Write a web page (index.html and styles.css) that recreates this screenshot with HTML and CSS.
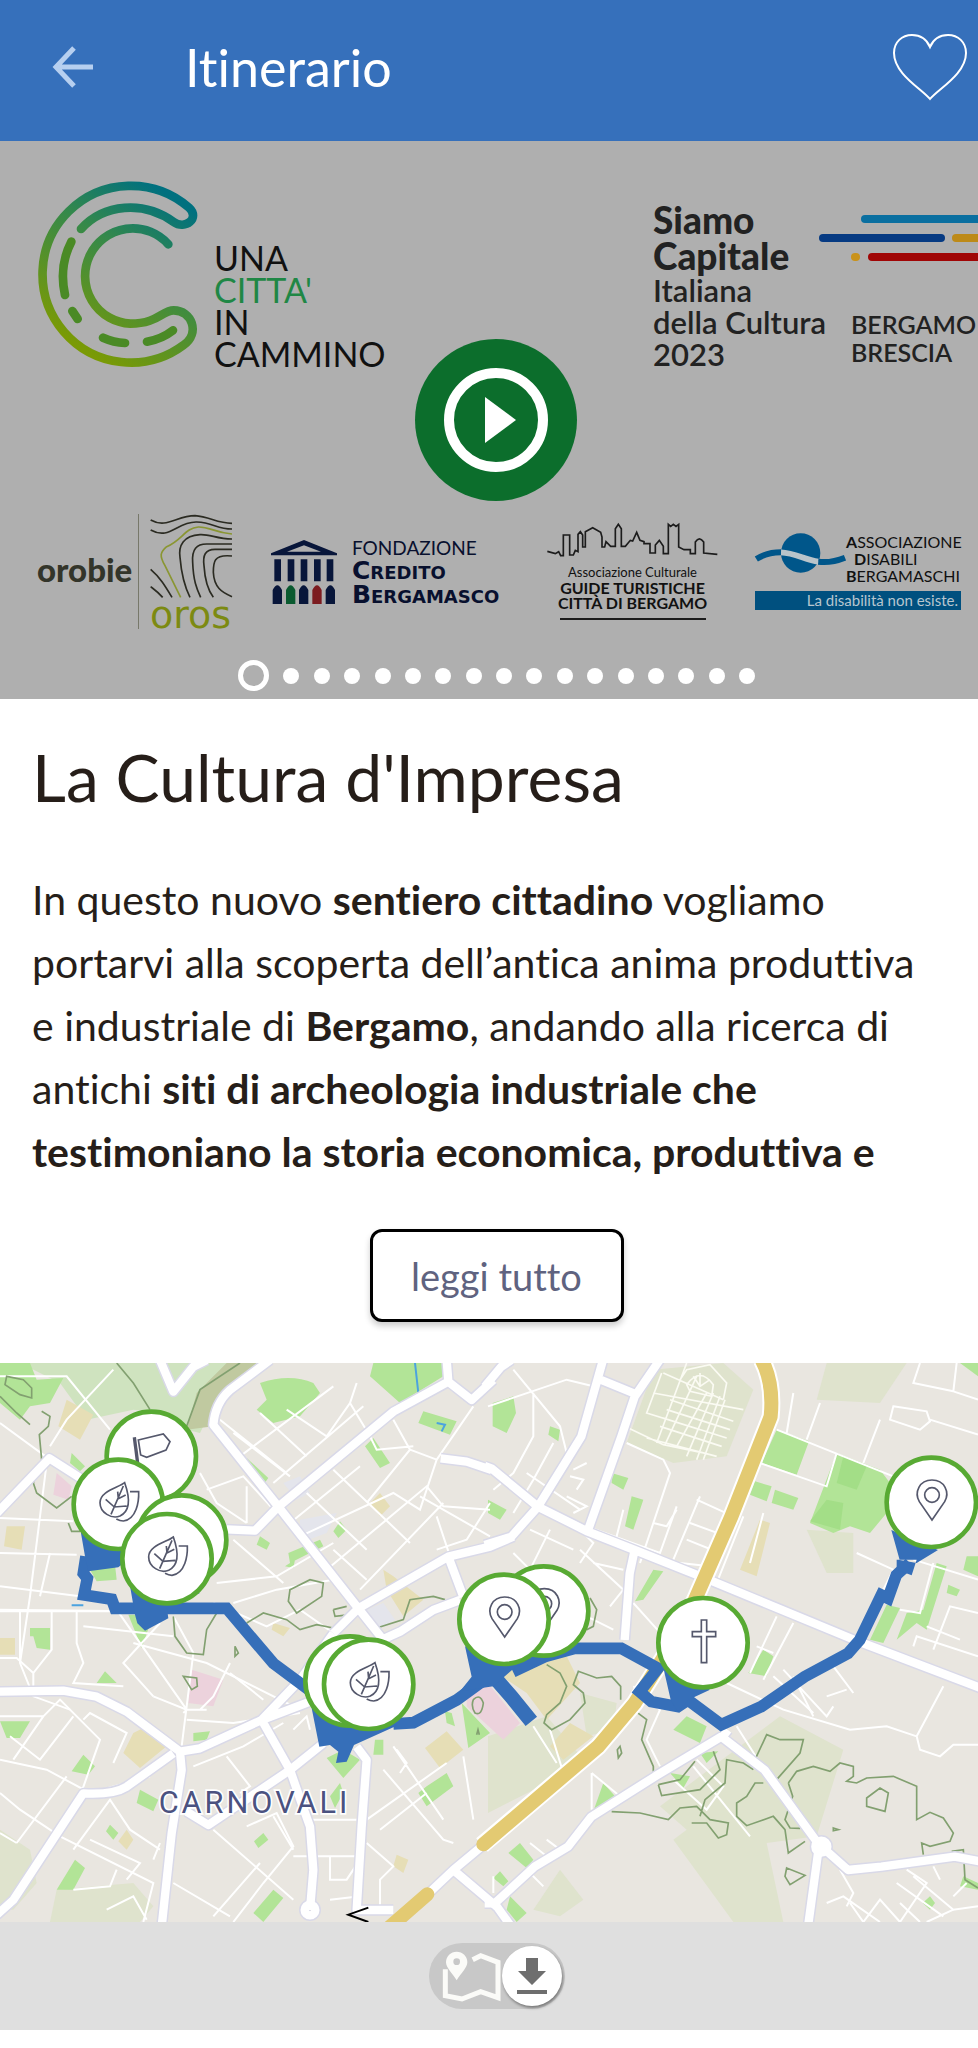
FILE: index.html
```html
<!DOCTYPE html>
<html lang="it">
<head>
    <meta charset="UTF-8">
    <meta name="viewport" content="width=device-width, initial-scale=1.0">
    <title>Itinerario</title>
    <link rel="stylesheet" href="styles.css">
</head>
<body>
    <header class="topbar">
        <button class="icon-btn" aria-label="Indietro">
            <svg width="42" height="42" viewBox="0 0 42 42" fill="none" stroke="#b6cff0" stroke-width="5"><path d="M41 21H4M22 2L4 21l18 19"/></svg>
        </button>
        <h1 class="topbar-title">Itinerario</h1>
        <button class="icon-btn like" aria-label="Preferiti">
            <svg width="76" height="68" viewBox="0 0 76 68" fill="none" stroke="#fff" stroke-width="2"><path d="M38 66C30 56 2 41 2 20C2 9 10 2 20 2c9 0 15 5 18 12C41 7 47 2 56 2c10 0 18 7 18 18C74 41 46 56 38 66z"/></svg>
        </button>
    </header>

    <section class="hero">
        <div class="logos-top">
            <div class="cammino">
                <svg width="161" height="187" viewBox="0 0 483 561" fill="none" stroke="url(#cgrad)" stroke-width="26" stroke-linecap="round">
                    <defs>
                        <linearGradient id="cgrad" gradientUnits="userSpaceOnUse" x1="400" y1="40" x2="110" y2="480">
                            <stop offset="0" stop-color="#00707f"/>
                            <stop offset=".4" stop-color="#35894a"/>
                            <stop offset="1" stop-color="#7a9a05"/>
                        </linearGradient>
                    </defs>
                    <path d="M132 138C200 62 320 52 410 117C445 142 490 105 456 74A265 265 0 1 0 440 486C490 451 465 382 410 382C375 382 362 422 280 422A143 143 0 1 1 394 184"/>
                    <path d="M103 176Q65 250 84 336M106 384L122 408" stroke="#4a8a25"/>
                    <path d="M198 464Q230 478 264 480M330 476Q375 468 408 442" stroke="#4a8a25"/>
                </svg>
                <p class="cammino-text">UNA<br><span class="green">CITTA'</span><br>IN<br>CAMMINO</p>
            </div>
            <div class="capitale">
                <p class="capitale-text"><b>Siamo<br>Capitale</b>Italiana<br>della Cultura<br>2023</p>
                <div class="capitale-side">
                    <svg width="159" height="47" viewBox="0 0 159 47" stroke-width="8" stroke-linecap="round">
                        <path d="M46 5H170" stroke="#0a6fa0"/>
                        <path d="M4 24H122" stroke="#063a82"/>
                        <path d="M137 24H170" stroke="#bd8a18"/>
                        <path d="M36 43H37" stroke="#c9921a"/>
                        <path d="M53 43H170" stroke="#a00505"/>
                    </svg>
                    <p>BERGAMO<br>BRESCIA</p>
                </div>
            </div>
        </div>

        <div class="logos-bottom">
            <div class="orobie">
                <span class="orobie-name">orobie</span>
                <div class="oros">
                    <svg width="82" height="84" viewBox="450 70 246 252" fill="none" stroke="#2b2b22" stroke-width="5">
                        <path d="M452 88C500 115 530 75 585 75C630 78 650 98 696 98M452 118C510 150 530 92 590 94C640 96 650 115 696 115"/>
                        <path d="M696 130C640 125 630 108 595 109C555 112 545 150 500 168C480 185 478 195 495 225L542 320" stroke="#8a9632"/>
                        <path d="M696 145C650 145 630 130 600 132C550 135 535 165 540 200C545 260 555 290 570 320M696 160H620C590 160 575 175 578 215C580 270 590 295 602 320M696 176H645C615 176 608 195 612 225C615 275 625 300 640 320M696 196C640 190 640 215 640 245C642 290 665 305 696 318M452 236C480 260 495 285 516 320M452 288C465 298 475 305 488 320"/>
                    </svg>
                    <span class="oros-name">oros</span>
                </div>
            </div>
            <div class="fondazione">
                <svg width="66" height="64" viewBox="0 0 198 192" fill="#08163a">
                    <path fill-rule="evenodd" d="M99 0L198 40V46H0V40ZM99 16L48 35H150Z"/>
                    <path d="M10 58h20v66H10zM50 58h20v66H50zM89 58h20v66H89zM129 58h20v66h-20zM167 58h20v66h-20z"/>
                    <path d="M5 192V150q14-28 28 0v42zM84 192V150q14-28 28 0v42zM164 192V150q14-28 28 0v42z"/>
                    <path d="M45 192V150q14-28 28 0v42z" fill="#0a5a30"/>
                    <path d="M124 192V150q14-28 28 0v42z" fill="#7c1c20"/>
                </svg>
                <p class="fondazione-text">FONDAZIONE<b>Credito<br>Bergamasco</b></p>
            </div>
            <div class="guide">
                <svg width="171" height="34" viewBox="205 98 513 102" fill="none" stroke="#1c1c1c" stroke-width="5">
                    <path d="M206 183L230 190L240 184L246 196H254V134H273V194H284L290 180L298 184V132L305 124L312 134V170H320V124L342 112L366 126L370 140V170H378L382 154L396 168H410V115L419 102L428 115V168H440L455 150L462 152L474 126L484 150L496 154V160H514V188H530V164L542 150L554 168V190H569V102L576 108L584 102L592 108L600 102V170L616 178H635V190H650V155Q662 136 675 155V188L716 192"/>
                </svg>
                <p class="guide-text">Associazione Culturale<b>GUIDE TURISTICHE<br>CITTÀ DI BERGAMO</b></p>
            </div>
            <div class="disabili">
                <div class="disabili-top">
                    <svg width="91" height="40" viewBox="0 0 273 120">
                        <circle cx="137" cy="60" r="59" fill="#00568a"/>
                        <path d="M78 58C120 60 150 80 190 86" stroke="#b9c4ca" stroke-width="17" fill="none"/>
                        <path d="M4 78C30 62 50 58 78 58M190 86C220 90 245 84 270 74" stroke="#00568a" stroke-width="18" fill="none"/>
                    </svg>
                    <p class="disabili-text"><b>A</b>SSOCIAZIONE<br><span class="indent"><b>D</b>ISABILI</span><br><b>B</b>ERGAMASCHI</p>
                </div>
                <p class="disabili-bar">La disabilità non esiste.</p>
            </div>
        </div>

        <div class="dots">
            <button class="dot active" aria-label="Immagine 1"></button>
            <button class="dot" aria-label="Immagine 2"></button>
            <button class="dot" aria-label="Immagine 3"></button>
            <button class="dot" aria-label="Immagine 4"></button>
            <button class="dot" aria-label="Immagine 5"></button>
            <button class="dot" aria-label="Immagine 6"></button>
            <button class="dot" aria-label="Immagine 7"></button>
            <button class="dot" aria-label="Immagine 8"></button>
            <button class="dot" aria-label="Immagine 9"></button>
            <button class="dot" aria-label="Immagine 10"></button>
            <button class="dot" aria-label="Immagine 11"></button>
            <button class="dot" aria-label="Immagine 12"></button>
            <button class="dot" aria-label="Immagine 13"></button>
            <button class="dot" aria-label="Immagine 14"></button>
            <button class="dot" aria-label="Immagine 15"></button>
            <button class="dot" aria-label="Immagine 16"></button>
            <button class="dot" aria-label="Immagine 17"></button>
        </div>

        <button class="play" aria-label="Riproduci">
            <svg width="163" height="163" viewBox="0 0 163 163">
                <circle cx="81" cy="81" r="81" fill="#0c6e2c"/>
                <circle cx="81" cy="81" r="47" fill="none" stroke="#fff" stroke-width="10"/>
                <path d="M70 58L101 81L70 104z" fill="#fff"/>
            </svg>
        </button>
    </section>

    <main class="content">
        <h2>La Cultura d'Impresa</h2>
        <p class="description">In questo nuovo <b>sentiero cittadino</b> vogliamo portarvi alla scoperta dell’antica anima produttiva e industriale di <b>Bergamo</b>, andando alla ricerca di antichi <b>siti di archeologia industriale che testimoniano la storia economica, produttiva e</b></p>
        <button class="read-more">leggi tutto</button>
    </main>

    <section class="map">
        <svg viewBox="0 0 2934 1677" fill="none">
            <defs>
                <g id="leaf" class="icon">
                    <path d="M19-65C0-50-55-40-55-5C-55 25-20 45 5 35C35 20 35-20 19-65zM15-55L-22 30M-2-38L0-17L22-28M-38-15L-12 8L25 5M35-38H61C62-10 55 45 15 50Q5 50-6 44"/>
                </g>
                <g id="place" class="icon">
                    <path d="M2 53L-36-2C-52-30-36-67 2-67C40-67 56-30 40-2z"/>
                    <circle cx="2" cy="-22" r="22"/>
                </g>
                <g id="cross" class="icon">
                    <path d="M-5-68H11V-33H38V-18H11V60H-5V-18H-32V-33H-5z"/>
                </g>
                <g id="flag" class="icon">
                    <path d="M-39-49L36-67L56-44L44-19L-14 3L-32-4z"/>
                    <path d="M-51-57L-41 20" stroke-width="10"/>
                </g>
                <g id="roads">
                    <g transform="translate(0 -9)">
                        <path d="M-10 460L148 295L250 360M480 0L520 95L580 20L620 0M810 0L690 90Q645 130 640 195L835 440L1075 745L1150 840M680 508L765 512L835 440L1180 155L1345 65L1415 120L1480 60M1345 65L1340 0M1000 820L1075 745L1345 590L1470 560L1540 530M1345 590L1390 710M1140 842L1200 815L1300 750L1380 720M1322 295L1400 305L1475 330"/>
                    </g>
                    <g transform="translate(1464 -9)">
                        <path d="M-10 318L10 325L150 440L300 515L440 570L640 650L1100 840L1480 985M345 0L280 230L150 440L70 530L-10 555M515 0L440 110L400 230L300 510M340 60L450 105M-10 80L40 20L70 0M440 570L425 640L410 840"/>
                    </g>
                    <g transform="translate(0 831)">
                        <path d="M-10 155L190 152L290 170L380 215L540 335L600 325L785 240L930 185M785 240L900 120L1000-20M785 240L870 390L905 490L930 560L940 690L930 810M870 390L970 310M870 390L625 555L560 515M540 335L545 390L515 580L485 860M520 340L380 440Q340 465 250 460L40 780L-10 825M1070 320L1100 360L1085 560L1070 810L1180 810M1180 860L1360 690L1480 590M1360 690L1490 800"/>
                        <circle cx="930" cy="810" r="16"/>
                    </g>
                    <g transform="translate(1464 831)">
                        <path d="M-10 790H20L140 680L240 620L310 530L500 410L700 290L830 390L990 610L1080 690L1180 680L1400 650L1480 665M990 640L960 860M20 790L70 860M720 270L700 295"/>
                        <circle cx="1000" cy="620" r="18"/>
                    </g>
                </g>
            </defs>

            <rect width="2934" height="1677" fill="#e9e6e0"/>

            <!-- woods and fields -->
            <g fill="#dfe3cd">
                <path d="M60 0H800L640 130L600 210L560 200L500 150L400 140L260 170L180 60z" fill="#cfe3bf"/>
                <path d="M560 200L590 90L680 0H790L650 120L640 190z" fill="#c0c9a0"/>
                <path d="M1960 20L2170 0L2260 80L2180 280L2020 300L1880 240z"/>
                <path d="M2480 0H2720L2640 120L2450 110z"/>
                <path d="M2420 500L2560 510V630H2480z"/>
                <path d="M0 1400L90 1460L110 1560L40 1640H0zM150 1677L170 1580L400 1560L460 1630L420 1677z"/>
                <path d="M1464 1120L1640 1060L1760 1200L1464 1350zM1740 990L1850 1020L1840 1100L1760 1120z"/>
                <path d="M2340 1060L2530 1160L2450 1420L2300 1440L2350 1677H2200L2020 1430L2060 1400L1980 1330L2180 1180z"/>
                <path d="M1600 1640L1680 1520L1750 1610L1680 1660z"/>
            </g>
            <!-- schools, hospitals -->
            <g fill="#e6deb6">
                <path d="M200 110L280 155L240 230L175 190zM1150 620L1180 640L1270 710L1210 760L1160 680z"/>
                <path d="M400 1110L440 1090L500 1150L420 1215L370 1170zM1340 1105L1390 1160L1320 1215L1275 1155z"/>
                <path d="M1490 930L1700 880L1740 960L1640 1070L1580 990zM1650 1150L1710 1080L1780 1120L1690 1190z"/>
                <path d="M20 490H75L65 560L12 550zM0 825H45V875H0zM1110 420L1140 390L1170 430L1140 460zM2280 470L2310 480L2270 640L2220 620z"/>
                <path d="M820 780L870 795L850 820L815 800zM380 1400L400 1430L380 1460L355 1435zM1190 1475L1225 1490L1210 1530L1180 1510z"/>
            </g>
            <g fill="#ecd2dc">
                <path d="M170 330L215 370L205 410L160 395zM575 920L670 950L640 1030L565 1020z"/>
                <path d="M1400 1000L1464 960L1560 1080L1510 1130L1400 1030z"/>
            </g>
            <path d="M1100 740L1150 720L1185 770L1130 800zM850 360L900 340L930 390L890 410zM900 470L1010 450L980 510L900 540z" fill="#e4e5ec"/>
            <!-- parks -->
            <g fill="#b2e497">
                <path d="M0 0H90L110 50L190 45L150 120L90 130L60 170L0 120zM780 60Q870 30 940 60L960 90L900 160L820 180L770 140L800 110zM1120 0H1330V40L1200 120L1110 40z"/>
                <path d="M1270 145L1370 175L1350 215L1255 180zM1120 225L1170 300L1140 315L1095 250zM740 285L805 345L790 365L740 310zM215 270L255 310L240 325L210 300z"/>
                <path d="M270 620L345 605L350 650L290 655zM385 755H460L425 855zM90 795H150V860L110 855L100 820H90zM315 925L350 960L290 960z"/>
                <path d="M780 520L810 540L800 560L770 545zM1020 475L1040 500L1015 525L1000 505zM865 570L960 530L970 550L870 600zM855 610L885 590L880 615z"/>
                <path d="M0 1075H90L60 1125H20zM250 1175L285 1210L265 1235L215 1225zM420 1280L475 1310L460 1345L410 1320zM330 1385L355 1410L340 1430L318 1405zM225 1490L255 1515L220 1580H170z"/>
                <path d="M980 1185L1030 1160L1080 1190L1030 1245zM990 1300L1020 1260L1030 1290L1005 1335zM1125 1130H1150V1175H1120zM820 1580L850 1605L790 1677L760 1650zM580 1110L630 1105L620 1130L580 1135zM790 1410L805 1430L775 1455L762 1435z"/>
                <path d="M1280 1270L1340 1230L1360 1270L1280 1330L1255 1290zM1385 1020L1470 1110L1405 1155zM1335 1045L1355 1050L1365 1090L1340 1080z"/>
                <path d="M1478 120L1540 100L1548 150L1520 210L1478 190zM1650 190L1680 200L1675 235L1645 215zM1835 330L1885 345L1870 380L1835 360zM1464 410L1520 440L1500 470L1464 450zM1895 400L1930 410L1900 500L1875 490z"/>
                <path d="M2330 200L2427 235L2390 335L2285 300zM2265 355L2315 370L2300 415L2250 395zM2325 380L2395 405L2380 440L2315 420zM2510 270L2640 320L2670 360L2660 450L2610 510L2550 490L2500 510L2430 480z"/>
                <path d="M1960 620L1990 625L1930 710L1905 715zM2810 600L2840 610L2780 800L2750 780L2690 830L2720 750L2770 740zM2660 725L2700 735L2650 840L2610 830zM2290 860L2320 880L2300 940L2245 930zM2845 665L2880 680L2870 700L2840 690zM2900 580H2934V640L2890 620z"/>
                <path d="M2060 1060L2120 1090L2100 1140L2020 1100zM1810 1260L1845 1300L1780 1345zM2010 1230L2070 1240L2050 1275zM2100 1170L2155 1165L2120 1200zM1560 1440L1600 1490L1580 1515L1525 1470zM1500 1525L1525 1555L1510 1570L1480 1545zM1530 1600L1580 1650L1550 1677L1520 1640zM2790 1600L2805 1620L2790 1640L2768 1620zM2890 1540L2934 1560V1580L2880 1570z"/>
                <path d="M2880 0H2934V40z"/>
            </g>
            <path d="M2480 410L2530 420L2520 500L2430 475zM2530 280L2600 310L2570 380L2510 360z" fill="#a3de87"/>
            <path d="M1245 0L1255 90M1310 180L1335 185L1325 205M215 727H250" stroke="#4ba3df" stroke-width="6"/>

            <!-- minor roads -->
            <g stroke="#fff" stroke-width="6">
                <path d="M0 40H200L330 200M150 250L200 170L340 20M0 180L150 290M140 300L90 700L60 900L100 1000L210 1040M0 465L220 475M0 570L230 575M0 670L240 700M0 745H330" />
                <path d="M150 570L120 700M0 740L400 745M60 740V890M0 885H50L100 930M155 740V860L100 930V970M230 740V840L250 900L220 960L370 970M250 790L520 820M350 740L560 1040M400 840L620 900L900 1040M480 780L370 900L460 1000M520 760L580 870L545 1150"/>
                <path d="M700 210L870 340M720 280L1000 70M660 170L860 330M860 140L980 220L1050 120L1070 60M780 150L920 280M820 360L1090 130M1180 170L1230 260L1100 420M1050 120L1110 220L1130 260L1240 250M920 390L1100 560M1000 320L1230 540M870 480L1080 310M900 520L1180 390L1260 440L1310 290L1420 130"/>
                <path d="M980 620L1280 370L1330 430L1470 440M1080 680L1330 420M1000 560L1100 650M1230 260L1310 290M1310 460L1350 580M1260 400L1470 520M1310 560L1400 530L1470 420M620 380L730 340L830 450M700 530L850 660M650 660L830 640L1000 540M700 720L830 680L1000 650M640 720L800 790L900 740L1000 810M600 330L650 420L740 480M740 370V480"/>
                <path d="M1464 130L1700 50L1780 70M1540 20L1680 190L1700 270M1600 90V220L1540 330L1480 380M1660 240L1600 350L1540 450M1580 330L1740 440M1700 400L1760 430L1720 450M1710 340L1750 350L1730 380M1720 320L1760 300M1760 490L1980 570L2030 430M1850 520L1870 440M1880 240L1990 290L2010 330L1920 600M1960 480L2000 490L2030 440"/>
                <path d="M2090 410L2200 460M2070 480L2180 520M2060 530L2160 570M2040 600L2130 610M2100 400L2020 590M2230 460L2150 660M2290 450L2250 600M2280 300L2480 370L2510 270M2330 200L2680 340M2380 90L2360 210M2460 120L2420 230M2640 170L2590 300M2680 130L2780 145L2790 175L2760 200L2670 170zM2790 170L2934 215M2760 0L2740 60L2860 85L2870 0M2860 85L2934 110"/>
                <path d="M2570 570L2680 620L2640 700M2740 590L2934 650M2700 740L2760 750L2800 600M2740 850L2750 820L2934 880M2800 860L2850 730L2934 750M2780 790L2880 830M2250 930L2330 760M2290 950L2380 780M2320 870L2270 850M2380 940L2440 1060M2480 1000L2540 980"/>
                <path d="M2180 960L2350 1040L2550 1100L2660 1090L2750 1120L2830 970M2750 1120L2760 1160L2820 1180L2860 1145H2934M2210 1090L2280 1200M2320 940L2440 1050M2350 920L2480 1060L2500 1030M2500 910L2560 990"/>
                <path d="M1740 600L1780 540L1740 500M1540 570L1590 620L1650 500M1590 500L1720 560M1740 560L1870 680L1830 730M1780 600L1870 620M1900 720L1990 820L2090 900M1840 800L1760 760L1730 700M1900 970L1980 1040L1940 1130L1980 1210M1775 1230L1860 1300M1775 1230V1340M2090 1190L2170 1270L2120 1340L2020 1250M2080 1210L2250 1420"/>
                <path d="M1150 1220L1330 1430L1360 1440M1180 1150L1330 1370M1100 1370L1340 1200M1140 1400L1280 1290M1190 1160L1220 1200L1200 1230M1390 1180L1420 1370M1100 1440L1180 1510L1140 1550V1640M990 1610L1080 1600M990 1480V1550L1040 1550L1080 1490M880 1480H1070M930 1370H1070M740 1390L830 1350L880 1450L790 1560L700 1677M640 1400L880 1610M520 1560L690 1660M780 1500L640 1660M820 1360L880 1460"/>
                <path d="M0 1060H130L180 1010L300 1130L240 1300M130 1060L40 1190M30 1120L120 1190L220 1060M0 1190L140 1220L270 1290L450 1240M0 1290L60 1340L180 1420L460 1560L430 1677M50 1440L200 1240M0 1410L50 1440M270 1430L420 1500L380 1550M220 1460L330 1310L390 1400L480 1460M460 1490L480 1440M320 1640L400 1600L440 1670M220 1580L330 1570L350 1520M250 1070L270 1050L380 1110L340 1200"/>
                <path d="M560 1070L700 1080L900 1050M550 1050L560 1040H600L640 1000L690 900M690 930L790 1010M580 1210L730 1150L850 1080M680 1180L750 1270L720 1290M880 1100L920 1060L930 1100M460 1000L560 1040L620 1040"/>
                <path d="M2480 1620L2530 1600L2640 1677M2550 1620L2590 1677L2640 1610L2700 1677M2520 1520L2560 1590L2540 1630M2720 1520L2780 1560L2700 1677M2690 1560L2830 1660M2740 1540L2860 1640L2934 1630M2800 1510L2820 1550M2860 1600L2900 1560M2700 1620L2760 1677" />
                <path d="M1590 1440L1640 1480L1620 1500M1640 1430L1680 1460M1480 1540V1590M1590 1530L1630 1570M1650 1100L1690 1230M1600 1090L1670 1200M2780 1677L2860 1640"/>
            </g>
            <!-- cemetery grid -->
            <g stroke="#fbfbf3" stroke-width="5">
                <path d="M1985 30L1940 150L2100 200M1990 30L2170 110M1960 90L2230 140M2060 0L1970 240M2090 40L1995 245M2120 90L2030 250M2140 90L2060 280M2160 100L2090 290M2175 110L2110 290M2010 110L2200 175M2000 140L2190 200M1990 165L2180 225M1980 190L2165 250M1940 225L2150 280M2040 50L2060 20L2130 5L2180 60L2170 110M2060 65Q2100 10 2140 65L2135 100L2070 85zM2100 30V70M2080 40L2100 70L2130 50M1885 195L1990 245L2110 270"/>
            </g>
            <!-- park boundaries -->
            <g stroke="#82a070" stroke-width="5">
                <path d="M350 0L400 60L450 140M720 0L600 80L560 190M20 40L70 50L95 75V105L60 95L15 65zM0 100L50 150L90 185M125 145L150 160L145 190L118 215L125 290L100 360L110 390L170 435L215 400M205 480L215 505L240 505"/>
                <path d="M870 680L930 650L970 660L965 700L890 750L865 715zM740 780L790 750L860 770L900 800L950 785L1000 795M1130 795L1210 770L1230 710L1300 700L1335 710M1000 740L1040 730M1000 740L1005 760L1050 755M520 760L525 820L560 870L610 875L620 800L650 750M705 850L715 870L705 880zM550 940L590 945L592 970L575 980z"/>
                <path d="M1640 905L1680 930L1700 970L1680 1020L1640 1055L1632 1080L1655 1100L1710 1070L1755 1020L1750 990L1720 965L1735 925L1790 945L1835 940L1862 970V1010M1900 1040L1940 1070L1925 1130L1960 1210V1230M1852 1160L1860 1150L1865 1170L1855 1185z"/>
                <path d="M1835 1346L1920 1350L2005 1370L2040 1335L2090 1330L2130 1370L2185 1380L2180 1415L2155 1425L2120 1380L2075 1380M2100 1360L2115 1310L2175 1260L2180 1190L2230 1200L2260 1220M2265 1190L2300 1115L2340 1130L2410 1130L2400 1170L2330 1250M2290 1260H2265L2240 1300L2210 1320V1360L2240 1388L2320 1360L2355 1400L2365 1470L2415 1435M2365 1260L2390 1225L2440 1210L2490 1225L2520 1200L2560 1210V1240L2540 1255L2570 1260L2600 1245L2680 1240L2750 1270V1370L2790 1348L2830 1365L2860 1410L2850 1435L2790 1450L2765 1440L2770 1475M2365 1260L2378 1300L2355 1370L2370 1395L2400 1396M2600 1305L2640 1275L2665 1290L2655 1345L2600 1330zM2500 1395L2515 1400L2500 1403zM2360 1515L2415 1537L2370 1565L2355 1540zM1975 1265L1985 1298L2100 1280L2160 1220L2140 1165M1975 1265L2040 1250L2085 1195M2855 1465L2890 1460L2895 1550L2934 1575"/>
                <path d="M1770 705L1790 740L1780 790L1760 800M1420 1010Q1440 990 1450 1020Q1445 1060 1425 1050Q1412 1030 1420 1010M1430 1115L1434 1100L1438 1115"/>
            </g>

            <use href="#roads" class="casing"/>
            <use href="#roads" class="road"/>
            <g stroke-linejoin="round">
                <path d="M2285 -10Q2322 60 2312 161L2194 461L2050 790L1904 1021L1794 1151L1446 1446" stroke="#fff" stroke-width="54"/>
                <path d="M2285 -10Q2322 60 2312 161L2194 461L2050 790L1904 1021L1794 1151L1450 1444M1282 1594L1160 1700" stroke="#e3ca72" stroke-width="42" stroke-linecap="round"/>
            </g>

            <!-- route -->
            <g class="route">
                <path d="M258 580L250 631L262 646L252 696L335 709L345 736H680L820 901L940 990M1180 1083L1240 1079L1370 1011L1480 931M1539 926L1634 881L1724 856H1864L1974 916L1919 986L1954 1016L2034 1031L2064 1011L2164 1085L2284 1031L2414 941L2544 871L2579 831L2644 696L2664 706L2689 636L2729 600"/>
                <path d="M1464 921L1534 1001L1594 1075" stroke-width="44"/>
                <path class="route-fill" d="M242 505L255 580L265 625L355 613L420 560zM385 640L405 755L412 781L435 803L505 766L500 730L600 690zM930 1010L958 1151L990 1146L1015 1166L1008 1200L1040 1196L1062 1146L1190 1088L1100 1031zM1395 850L1415 941L1380 985L1480 970L1560 900L1540 880zM1989 910L2012 1010L2034 1046L2064 1011L2130 980zM2674 501L2699 591L2750 600L2814 561zM2690 590H2750L2735 637L2690 620z"/>
            </g>

            <text class="map-label" x="476" y="1349">CARNOVALI</text>
            <path d="M1105 1634L1045 1655L1105 1677" stroke="#000" stroke-width="6"/>

            <a href="#partenza" class="pin" aria-label="Partenza" transform="translate(454 280)"><circle r="134"/><use href="#flag"/></a>
            <a href="#tappa-1" class="pin" aria-label="Tappa 1" transform="translate(355 424)"><circle r="134"/><use href="#leaf"/></a>
            <a href="#tappa-2" class="pin" aria-label="Tappa 2" transform="translate(545 531)"><circle r="134"/></a>
            <a href="#tappa-3" class="pin" aria-label="Tappa 3" transform="translate(501 587)"><circle r="134"/><use href="#leaf"/></a>
            <a href="#tappa-4" class="pin" aria-label="Tappa 4" transform="translate(1050 954)"><circle r="134"/></a>
            <a href="#tappa-5" class="pin" aria-label="Tappa 5" transform="translate(1106 964)"><circle r="134"/><use href="#leaf"/></a>
            <a href="#tappa-6" class="pin" aria-label="Tappa 6" transform="translate(1631 744)"><circle r="134"/><use href="#place"/></a>
            <a href="#tappa-7" class="pin" aria-label="Tappa 7" transform="translate(1512 769)"><circle r="134"/><use href="#place"/></a>
            <a href="#tappa-8" class="pin" aria-label="Tappa 8" transform="translate(2109 839)"><circle r="134"/><use href="#cross"/></a>
            <a href="#arrivo" class="pin" aria-label="Arrivo" transform="translate(2794 418)"><circle r="134"/><use href="#place"/></a>
        </svg>
    </section>

    <footer class="bottombar">
        <label class="toggle">
            <input type="checkbox" aria-label="Scarica mappa offline" checked>
            <svg width="60" height="50" viewBox="0 0 180 150" fill="none">
                <path d="M10 55V134L60 144L116 122L168 140V34L116 14L92 26" stroke="#fbfbf8" stroke-width="15"/>
                <path d="M44 88C30 66 12 50 12 34A32 32 0 0 1 76 34C76 50 58 66 44 88z" fill="#fbfbf8"/>
                <circle cx="44" cy="32" r="10" fill="#c8c8c8"/>
            </svg>
            <span class="knob">
                <svg width="30" height="36" viewBox="0 0 30 36" fill="#6e6e6e"><path d="M9 0H21V13H29L15 27L1 13H9zM0 32H30V36H0z"/></svg>
            </span>
        </label>
    </footer>
</body>
</html>
```
FILE: styles.css
```css
* {
    box-sizing: border-box;
}
body {
    margin: 0;
    font-family: Lato, sans-serif;
    font-variant-ligatures: none;
    background: #fff;
    color: #261e19;
    overflow-x: hidden;
}
h1, h2, p {
    margin: 0;
    font-weight: normal;
}
svg {
    display: block;
    flex: none;
    overflow: visible;
}
button {
    padding: 0;
    border: none;
    background: none;
    font-family: inherit;
    font-variant-ligatures: none;
    cursor: pointer;
}

/* top bar */
.topbar {
    display: flex;
    align-items: center;
    height: 141px;
    padding: 0 10px 8px 52px;
    background: #3670bb;
}
.topbar-title {
    margin-left: 91px;
    color: #fff;
    font-size: 52px;
    line-height: 60px;
}
.like {
    margin-left: auto;
}

/* slideshow */
.hero {
    position: relative;
    padding: 42px 0 8px;
    background: #afafaf;
    color: #111;
    overflow: hidden;
}
.logos-top {
    display: flex;
    justify-content: space-between;
    align-items: flex-end;
    height: 187px;
    padding-left: 37px;
}
.cammino {
    display: flex;
    align-items: flex-end;
    gap: 16px;
}
.cammino-text {
    font-size: 34px;
    line-height: 32px;
}
.green {
    color: #1f8745;
}
.capitale {
    display: flex;
    align-items: flex-end;
    color: #222;
}
.capitale-text {
    width: 166px;
    font-size: 31px;
    font-weight: 600;
    line-height: 32px;
    white-space: nowrap;
}
.capitale-text b {
    display: block;
    font-size: 37px;
    font-weight: 900;
    line-height: 36px;
}
.capitale-side {
    display: flex;
    flex-direction: column;
    gap: 49px;
}
.capitale-side p {
    padding: 0 0 4px 32px;
    font-size: 25px;
    font-weight: 600;
    line-height: 28px;
}
.logos-bottom {
    display: flex;
    align-items: center;
    gap: 37px;
    margin-top: 144px;
    padding-left: 37px;
}
.orobie {
    display: flex;
    align-items: center;
    width: 197px;
    height: 115px;
}
.orobie-name {
    width: 101px;
    padding-bottom: 6px;
    color: #33352a;
    font-size: 33px;
    font-weight: 900;
}
.oros {
    padding-left: 11px;
    border-left: 1px solid #77786a;
}
.oros-name {
    display: block;
    height: 31px;
    color: #7c8a12;
    font-family: "DejaVu Sans", sans-serif;
    font-size: 38px;
    line-height: 34px;
}
.fondazione {
    display: flex;
    align-items: center;
    gap: 15px;
    width: 239px;
    color: #08102e;
}
.fondazione-text {
    font-size: 19px;
    line-height: 22px;
}
.fondazione-text b {
    display: block;
    font-family: "DejaVu Sans", sans-serif;
    font-size: 25px;
    line-height: 24px;
    font-variant: small-caps;
}
.guide {
    width: 171px;
    white-space: nowrap;
}
.guide-text {
    width: 146px;
    margin: 8px auto 0;
    padding-bottom: 8px;
    border-bottom: 2px solid #1c1c1c;
    display: flex;
    flex-direction: column;
    align-items: center;
    font-size: 13px;
    line-height: 15px;
    text-align: center;
}
.guide-text b {
    font-size: 16px;
}
.disabili {
    width: 206px;
}
.disabili-top {
    display: flex;
    align-items: flex-start;
}
.disabili-text {
    font-size: 16px;
    line-height: 17px;
}
.indent {
    padding-left: 8px;
}
.disabili-bar {
    margin-top: 7px;
    padding-right: 3px;
    background: #00507f;
    color: #b7c6cf;
    font-size: 15px;
    line-height: 19px;
    text-align: right;
}
.dots {
    display: flex;
    align-items: center;
    justify-content: space-between;
    width: 532px;
    margin: 31px auto 0;
    padding-left: 15px;
}
.dot {
    width: 16px;
    height: 16px;
    border-radius: 50%;
    background: #fff;
}
.dot.active {
    width: 31px;
    height: 31px;
    border: 5px solid #fff;
    background: none;
}
.play {
    position: absolute;
    top: 50%;
    left: 50%;
    margin: -81px 0 0 -74px;
}

/* description */
.content {
    display: flex;
    flex-direction: column;
    padding: 38px 32px 41px;
}
h2 {
    font-size: 66px;
    line-height: 80px;
}
.description {
    margin-top: 51px;
    font-size: 41px;
    line-height: 63px;
}
.read-more {
    align-self: center;
    width: 254px;
    height: 93px;
    margin: 46px 0 0 15px;
    border: 3px solid #000;
    border-radius: 12px;
    background: #fff;
    box-shadow: 0 4px 6px rgba(0,0,0,0.2);
    color: #5f6380;
    font-size: 38px;
}

/* map */
.map svg {
    width: 100%;
    height: auto;
    overflow: hidden;
}
.casing {
    stroke: #d9d9e8;
    stroke-width: 34;
    stroke-linejoin: round;
}
.road {
    stroke: #fff;
    stroke-width: 25;
    stroke-linejoin: round;
}
.route {
    stroke: #366fb9;
    stroke-width: 35;
}
.route-fill {
    fill: #366fb9;
    stroke: none;
}
.pin circle {
    fill: #fff;
    stroke: #58aa33;
    stroke-width: 14;
}
.icon {
    stroke: #55586c;
    stroke-width: 5;
}
.pin .icon circle,
.icon circle {
    fill: none;
    stroke: #55586c;
    stroke-width: 5;
}
.map-label {
    fill: #4b5280;
    stroke: #fff;
    stroke-width: 10;
    paint-order: stroke;
    font-family: Roboto, sans-serif;
    font-size: 92px;
    letter-spacing: 9px;
}

/* bottom bar */
.bottombar {
    display: flex;
    justify-content: center;
    padding: 21px 0 21px 15px;
    background: #dfdfdf;
}
.toggle {
    display: flex;
    align-items: center;
    justify-content: space-between;
    width: 136px;
    height: 66px;
    padding: 0 3px 0 13px;
    border-radius: 33px;
    background: #c8c8c8;
    cursor: pointer;
}
.toggle input {
    appearance: none;
    position: absolute;
    margin: 0;
}
.knob {
    display: flex;
    align-items: center;
    justify-content: center;
    width: 60px;
    height: 60px;
    border-radius: 50%;
    background: #fff;
    box-shadow: 1px 2px 3px rgba(0,0,0,0.4);
}
```
